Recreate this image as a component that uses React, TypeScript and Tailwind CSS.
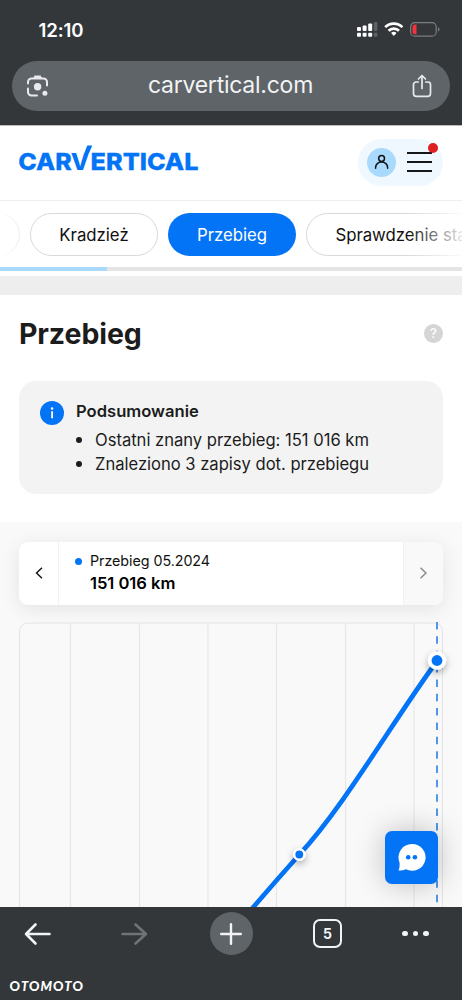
import React from "react";

const gridLines = [51, 120, 188.5, 257, 326, 394.5];

function StatusBar() {
  return (
    <div className="flex h-[60px] items-center justify-between pl-[38.5px] pr-[21px]">
      <span className="text-[18.6px] leading-6 font-semibold tracking-[-0.1px] text-white">12:10</span>
      <svg width="84" height="20" viewBox="0 0 84 20" className="-mt-[2px] shrink-0">
        <g fill="#fff">
          <rect x="0" y="8" width="4" height="4" rx="1" />
          <rect x="5.6" y="6.6" width="4" height="5.4" rx="1" />
          <rect x="11.2" y="4.6" width="4" height="7.4" rx="1" />
          <rect x="0" y="13.7" width="4" height="4" rx="1" />
          <rect x="5.6" y="13.7" width="4" height="4" rx="1" />
          <rect x="11.2" y="13.7" width="4" height="4" rx="1" />
        </g>
        <g fill="#5f6265">
          <rect x="16.8" y="3" width="3.6" height="9" rx="1" />
          <rect x="16.8" y="13.7" width="3.6" height="4" rx="1" />
        </g>
        <g fill="none" stroke="#fff" strokeWidth="2.7">
          <path d="M28.2 8.1a12.2 12.2 0 0 1 17.2 0" />
          <path d="M31.6 11.8a7.4 7.4 0 0 1 10.4 0" />
        </g>
        <path d="M36.8 16.9l-2.7-2.8a3.9 3.9 0 0 1 5.4 0z" fill="#fff" />
        <rect x="53.6" y="3.7" width="25.6" height="13.4" rx="4.2" fill="none" stroke="#7b7d80" strokeWidth="1.2" />
        <path d="M81 8.2q1.5 .6 1.5 2.2t-1.5 2.2z" fill="#7b7d80" />
        <path d="M58.2 5.6h1.3v9.6h-1.3a2.7 2.7 0 0 1-2.7-2.7V8.3a2.7 2.7 0 0 1 2.7-2.7z" fill="#f5333f" />
      </svg>
    </div>
  );
}

function AddressBar() {
  return (
    <div className="mx-3 mt-[0.5px] flex h-[50px] items-center justify-between rounded-full bg-[#5f6468] pl-[14px] pr-[17px]">
      <svg width="24" height="24" viewBox="0 0 24 24" fill="none" stroke="#e8eaed" strokeWidth="2" strokeLinecap="round">
        <path d="M2 9.5V8a3.5 3.5 0 0 1 3.5-3.5h12A3.5 3.5 0 0 1 21 8v3.5M2 14.5V18a3.5 3.5 0 0 0 3.5 3.5H11" />
        <path d="M7 4.5L8.6 1.5h6L16.2 4.5z" fill="#e8eaed" stroke="none" />
        <circle cx="11.6" cy="12.8" r="3.7" fill="#e8eaed" stroke="none" />
        <circle cx="18.9" cy="19.2" r="2.5" fill="#e8eaed" stroke="none" />
      </svg>
      <span className="-mt-[2px] text-[23px] leading-8 tracking-[-0.25px] text-[#f2f3f4]">carvertical.com</span>
      <svg width="22" height="26" viewBox="0 0 22 26" fill="none" stroke="#e8eaed" strokeWidth="1.7" strokeLinecap="round" strokeLinejoin="round">
        <path d="M7.2 9H5a2.5 2.5 0 0 0-2.5 2.5v9A2.8 2.8 0 0 0 5.3 23.3h11.4a2.8 2.8 0 0 0 2.8-2.8v-9A2.5 2.5 0 0 0 17 9h-2.2" />
        <path d="M11 15.5V2.8M7.5 6L11 2.5L14.5 6" />
      </svg>
    </div>
  );
}

function Logo() {
  return (
    <svg width="181" height="30" viewBox="0 0 181 30" aria-label="carVertical" className="font-['Inter',sans-serif] text-[23.5px] font-extrabold" fill="#0374f5">
      <text x="-0.7" y="24.5" textLength="53.4" lengthAdjust="spacingAndGlyphs" stroke="#0374f5" strokeWidth="0.3">CAR</text>
      <text x="51.8" y="24.5" textLength="18.5" lengthAdjust="spacingAndGlyphs">V</text>
      <path d="M65.3 8L68.3 0.5H73.2L70.1 8z" />
      <text x="71.6" y="24.5" textLength="107.9" lengthAdjust="spacingAndGlyphs" stroke="#0374f5" strokeWidth="0.3">ERTICAL</text>
    </svg>
  );
}

function SiteHeader() {
  return (
    <header className="flex h-[76px] shrink-0 items-center justify-between border-b border-t border-b-[#eeeeee] border-t-[#b9bbbd] bg-white pl-[19px] pr-[19px]">
      <div className="-mt-[7px]"><Logo /></div>
      <div className="relative -mt-[2px] flex h-[47px] w-[85px] items-center gap-[11px] rounded-full bg-[#f0f8ff] pl-[9px]">
        <div className="flex size-[29px] items-center justify-center rounded-full bg-[#a9dafe]">
          <svg width="16" height="16" viewBox="0 0 16 16" fill="none" stroke="#111" strokeWidth="1.5" strokeLinecap="round">
            <circle cx="7.6" cy="4.5" r="2.9" />
            <path d="M1.6 14.2v-.7C1.6 10.5 4.100 8 7.600 8s6 2.500 6 5.500v.7" />
          </svg>
        </div>
        <div className="flex w-[24.5px] flex-col gap-[7px]">
          <span className="h-[2px] bg-[#151719]" />
          <span className="h-[2px] bg-[#151719]" />
          <span className="h-[2px] bg-[#151719]" />
        </div>
        <span className="absolute right-[5px] top-[4px] size-[10px] rounded-full bg-[#df2020]" />
      </div>
    </header>
  );
}

function Tabs() {
  const base = "flex h-[43px] shrink-0 items-center justify-center rounded-full pt-[2px] text-[16.8px] tracking-[-0.02px]";
  return (
    <nav className="relative h-[75px] shrink-0 overflow-hidden bg-white">
      <div className="-ml-[80px] flex gap-[10px] pt-3">
        <div className={`${base} w-[100px] border border-[#eeeeee]`} />
        <div className={`${base} w-[128px] border border-[#d9d9d9] text-[#111]`}>Kradzież</div>
        <div className={`${base} w-[128px] bg-[#0374f5] text-white`}>Przebieg</div>
        <div className={`${base} w-[210px] border border-[#d9d9d9] whitespace-nowrap text-[#111]`}>Sprawdzenie stanu</div>
      </div>
      <div className="mt-[11px] h-[4px] bg-[#e5e5e5]">
        <div className="h-full w-[106.5px] bg-[#a9dafe]" />
      </div>
      <div className="absolute right-0 top-0 h-[60px] w-[54px] bg-linear-to-r from-white/0 to-white/90" />
      <div className="absolute left-0 top-0 h-[60px] w-[18px] bg-linear-to-r from-white to-white/0" />
    </nav>
  );
}

function Summary() {
  return (
    <section className="h-[227px] shrink-0 bg-white px-[19px] pt-[19px]">
      <div className="flex h-[38px] items-center justify-between">
        <h1 className="pt-[2px] text-[28.5px] leading-[38px] font-bold tracking-[-0.1px] text-[#1c1c1c]">Przebieg</h1>
        <span className="flex size-[19px] items-center justify-center rounded-full bg-[#d5d5d5] pt-[1px] text-[13px] font-medium text-white">?</span>
      </div>
      <div className="mt-[28.5px] flex h-[113.5px] gap-3 rounded-[17px] bg-[#f3f3f3] pl-[21px] pt-[18.5px] text-[16.6px] leading-6 text-[#1c1c1c]">
        <svg width="24" height="24" viewBox="0 0 24 24" className="mt-[2px] shrink-0">
          <circle cx="12" cy="12" r="12" fill="#0374f5" />
          <circle cx="12.1" cy="7.5" r="1.25" fill="#fff" />
          <path d="M12.1 10.300v7" stroke="#fff" strokeWidth="1.8" />
        </svg>
        <div>
          <p className="font-semibold">Podsumowanie</p>
          <ul className="mt-[5px] tracking-[-0.02px]">
            <li className="flex items-center gap-[13px]"><span className="size-[6px] rounded-full bg-[#1c1c1c]" />Ostatni znany przebieg: 151 016 km</li>
            <li className="flex items-center gap-[13px]"><span className="size-[6px] rounded-full bg-[#1c1c1c]" />Znaleziono 3 zapisy dot. przebiegu</li>
          </ul>
        </div>
      </div>
    </section>
  );
}

function RecordPicker() {
  return (
    <div className="flex h-[63px] overflow-hidden rounded-[9px] bg-white shadow-[0_4px_20px_rgba(0,0,0,0.09)]">
      <button className="flex w-[40px] items-center justify-center border-r border-[#f1f1f1]">
        <svg width="8" height="12" viewBox="0 0 8 12" fill="none" stroke="#111" strokeWidth="1.4" className="-mt-[1px]"><path d="M7 .7L1.5 6L7 11.3" /></svg>
      </button>
      <div className="flex flex-1 gap-[8px] pl-[16px] pt-[8px]">
        <span className="mt-[8px] size-[7px] rounded-full bg-[#0374f5]" />
        <div className="text-[#111]">
          <p className="text-[14.3px] leading-[22px] tracking-[-0.05px]">Przebieg 05.2024</p>
          <p className="mt-[1px] text-[16.6px] leading-[20px] font-semibold tracking-[-0.05px] text-black">151 016 km</p>
        </div>
      </div>
      <button className="flex w-[40px] items-center justify-center border-l border-[#f1f1f1] bg-[#f9f9f9]">
        <svg width="8" height="12" viewBox="0 0 8 12" fill="none" stroke="#888" strokeWidth="1.4" className="-mt-[1px]"><path d="M.5 .7L6 6L.5 11.3" /></svg>
      </button>
    </div>
  );
}

function MileageChart() {
  return (
    <svg width="443" height="285" viewBox="0 0 443 285" className="mt-[17px] block">
      <defs>
        <filter id="pointShadow" x="-100%" y="-100%" width="300%" height="300%">
          <feDropShadow dx="0" dy="3" stdDeviation="3.5" floodOpacity="0.32" />
        </filter>
      </defs>
      <path d="M.5 285V9A8 8 0 0 1 8.500 1H415.500A8 8 0 0 1 423.500 9V285" fill="none" stroke="#e4e4e4" />
      {gridLines.map((x) => <path key={x} d={`M${x + 0.5} 1V285`} stroke="#e7e7e7" strokeWidth="1.2" />)}
      <path d="M418 0V285" stroke="#4c91e8" strokeWidth="1.9" strokeDasharray="7.5 6.85" />
      <path d="M231 289Q255 261 280 233C326 183 372 102 418 39" fill="none" stroke="#0374f5" strokeWidth="4.7" />
      <g filter="url(#pointShadow)">
        <circle cx="418" cy="38.5" r="9.2" fill="#fff" />
        <circle cx="280.3" cy="232.5" r="6.4" fill="#fff" />
      </g>
      <circle cx="418" cy="38.5" r="5.4" fill="#0374f5" />
      <circle cx="280.3" cy="232.5" r="3.9" fill="#0374f5" />
    </svg>
  );
}

function ChatButton() {
  return (
    <button className="absolute bottom-[23.5px] right-[24px] flex size-[53px] items-center justify-center rounded-[7px] bg-[#0374f5] shadow-[0_0_30px_rgba(0,0,0,0.24)]">
      <svg width="29" height="29" viewBox="0 0 29 29">
        <path d="M15 1A13.4 13.4 0 1 1 9 26.3Q5 28 1.5 27.5Q3 25 2.5 19.5A13.4 13.4 0 0 1 15 1z" fill="#fff" />
        <circle cx="11.2" cy="14.2" r="2.3" fill="#0374f5" />
        <circle cx="17.9" cy="14.2" r="2.3" fill="#0374f5" />
      </svg>
    </button>
  );
}

function BottomBar() {
  return (
    <footer className="flex h-[93px] shrink-0 flex-col bg-[#33373a]">
      <div className="flex h-[53px] items-center pl-[24px]">
        <svg width="28" height="24" viewBox="0 0 28 24" fill="none" stroke="#f1f3f5" strokeWidth="2.6" strokeLinecap="round" strokeLinejoin="round"><path d="M25.5 12H2M11.5 2.5L2 12L11.5 21.5" /></svg>
        <svg width="28" height="24" viewBox="0 0 28 24" fill="none" stroke="#6f7376" strokeWidth="2.6" strokeLinecap="round" strokeLinejoin="round" className="ml-[68px]"><path d="M2.5 12H26M15.5 2.5L26 12L15.5 21.5" /></svg>
        <div className="ml-[61.5px] flex size-[43px] items-center justify-center rounded-full bg-[#5f6468]">
          <svg width="24" height="24" viewBox="0 0 24 24" stroke="#f1f3f5" strokeWidth="2.4" strokeLinecap="round"><path d="M12 2.2V21.8M2.2 12H21.8" /></svg>
        </div>
        <div className="ml-[60.5px] flex size-[29px] items-center justify-center rounded-[7px] border-2 border-[#f1f3f5] text-[14px] font-bold text-[#f1f3f5]">5</div>
        <div className="ml-[60px] flex gap-[5px]">
          <span className="size-[5.5px] rounded-full bg-[#f1f3f5]" />
          <span className="size-[5.5px] rounded-full bg-[#f1f3f5]" />
          <span className="size-[5.5px] rounded-full bg-[#f1f3f5]" />
        </div>
      </div>
      <svg width="100" height="40" viewBox="0 0 100 40" fill="#fff" className="font-['Lato',sans-serif] text-[13px] font-black">
        <g transform="translate(9.5 30.5)">
          <text textLength="73.5" lengthAdjust="spacing">
            O<tspan className="italic">T</tspan>O<tspan className="italic">M</tspan>O<tspan className="italic">T</tspan>O
          </text>
        </g>
      </svg>
    </footer>
  );
}

export default function App() {
  return (
    <div className="flex h-[1000px] w-[462px] flex-col overflow-hidden bg-white font-['Inter','Liberation_Sans',sans-serif]">
      <div className="h-[125px] shrink-0 bg-[#33373a]">
        <StatusBar />
        <AddressBar />
      </div>
      <SiteHeader />
      <Tabs />
      <div className="h-[19px] shrink-0 bg-[#eeeeee]" />
      <Summary />
      <main className="relative h-[385px] shrink-0 overflow-hidden bg-[#f9f9f9] px-[19px] pt-5">
        <RecordPicker />
        <MileageChart />
        <ChatButton />
      </main>
      <BottomBar />
    </div>
  );
}
